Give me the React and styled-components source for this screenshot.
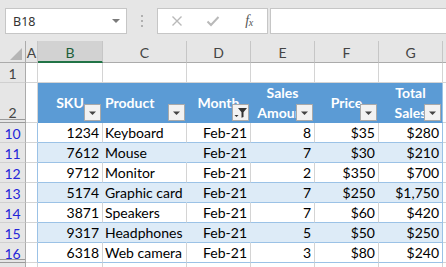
import React from "react";
import styled, { createGlobalStyle } from "styled-components";

const GlobalStyle = createGlobalStyle`
  html, body { margin: 0; padding: 0; background: #e6e6e6; overflow: hidden; }
  body { width: 446px; height: 267px; font-family: Lato, "Liberation Sans", sans-serif; }
`;

const Page = styled.div`
  width: 446px;
  height: 267px;
  overflow: hidden;
  background: #e6e6e6;
`;

const Toolbar = styled.div`
  height: 41px;
  box-sizing: border-box;
  padding: 8px 0 0 5px;
  display: flex;
  align-items: flex-start;
`;

const NameBox = styled.div`
  width: 122px;
  height: 26px;
  box-sizing: border-box;
  border: 1px solid #c6c6c6;
  background: #fff;
  display: flex;
  align-items: center;
  justify-content: space-between;
  padding: 0 6px 0 7px;
  font-family: "Noto Sans", sans-serif;
  font-size: 12.5px;
  color: #333;
`;

const Caret = styled.span`
  width: 0;
  height: 0;
  border-left: 4px solid transparent;
  border-right: 4px solid transparent;
  border-top: 4px solid #7a7a7a;
`;

const Grip = styled.div`
  width: 30px;
  height: 26px;
  display: flex;
  flex-direction: column;
  align-items: center;
  justify-content: center;
  gap: 3px;
  & > span {
    width: 2px;
    height: 2px;
    background: #b0b0b0;
  }
`;

const FxBox = styled.div`
  width: 111px;
  height: 26px;
  box-sizing: border-box;
  border: 1px solid #c6c6c6;
  background: #fff;
  display: grid;
  grid-template-columns: repeat(3, 36px);
  padding-left: 1px;
  align-items: center;
  justify-items: center;
`;

const FxText = styled.span`
  font-family: "Liberation Serif", serif;
  font-style: italic;
  font-size: 14px;
  color: #555;
  letter-spacing: -0.5px;
  & > sub {
    font-size: 10px;
    vertical-align: -1px;
  }
`;

const Formula = styled.div`
  flex: 1;
  height: 26px;
  box-sizing: border-box;
  border: 1px solid #c6c6c6;
  background: #fff;
  margin-left: 2px;
  margin-right: -4px;
`;

const Sheet = styled.div`
  display: grid;
  grid-template-columns: 26px 12px 65px 84px 64px 64px 64px 64px 1fr;
  grid-template-rows: 22px 20px 40px repeat(8, 20px);
  background: #fff;
  font-size: 14px;
`;

const Corner = styled.div`
  background: #e6e6e6;
  border-right: 1px solid #ababab;
  border-bottom: 1px solid #ababab;
  position: relative;
  box-sizing: border-box;
`;

const CornerTri = styled.svg`
  position: absolute;
  right: 3px;
  bottom: 2px;
`;

const ColHead = styled.div`
  box-sizing: border-box;
  background: ${(p) => (p.$selected ? "#d2d2d2" : "#e6e6e6")};
  border-right: 1px solid #c6c6c6;
  border-bottom: ${(p) => (p.$selected ? "2px solid #217346" : "1px solid #ababab")};
  color: ${(p) => (p.$selected ? "#1d5e3a" : "#444")};
  display: flex;
  align-items: center;
  justify-content: center;
  padding-top: 2px;
  font-size: 14px;
  overflow: hidden;
`;

const RowHead = styled.div`
  box-sizing: border-box;
  background: #e6e6e6;
  border-right: 1px solid #ababab;
  border-bottom: 1px solid ${(p) => (p.$hiddenAfter ? "#9a9a9a" : "#d0d0d0")};
  box-shadow: ${(p) =>
    p.$hiddenAfter ? "inset 0 -2px 0 #e6e6e6, inset 0 -3px 0 #9a9a9a" : "none"};
  color: ${(p) => (p.$filtered ? "#2424d8" : "#444")};
  display: flex;
  align-items: flex-end;
  justify-content: center;
  padding-bottom: ${(p) => (p.$tall ? "2px" : "1px")};
  font-size: 14px;
  line-height: 14px;
`;

const Cell = styled.div`
  box-sizing: border-box;
  position: relative;
  overflow: hidden;
  white-space: nowrap;
  display: flex;
  align-items: flex-end;
  line-height: 19px;
  padding: 0 3px 0 2px;
  color: #000;
  background: ${(p) => p.$fill || "transparent"};
  border-right: 1px solid ${(p) => p.$vline || "#d4d4d4"};
  border-bottom: 1px solid ${(p) => p.$hline || "#d4d4d4"};
  justify-content: ${(p) =>
    p.$align === "right" ? "flex-end" : p.$align === "center" ? "center" : "flex-start"};
`;

const HeadCell = styled.div`
  box-sizing: border-box;
  position: relative;
  overflow: hidden;
  white-space: nowrap;
  background: #5b9bd5;
  border-bottom: 1px solid #5b9bd5;
  border-right: 1px solid ${(p) => p.$vline || "#5b9bd5"};
  color: #fff;
  font-weight: 700;
  display: flex;
  flex-direction: column;
  justify-content: center;
  align-items: ${(p) => (p.$align === "left" ? "flex-start" : "center")};
  padding: 0 2px;
  line-height: 20px;
`;

const FilterBtn = styled.div`
  position: absolute;
  right: 1px;
  bottom: 1px;
  width: 17px;
  height: 17px;
  box-sizing: border-box;
  background: #f2f2f2;
  border: 1px solid #a9a9a9;
  display: flex;
  align-items: center;
  justify-content: center;
`;

const rows = [
  [10, "1234", "Keyboard", "Feb-21", "8", "$35", "$280"],
  [11, "7612", "Mouse", "Feb-21", "7", "$30", "$210"],
  [12, "9712", "Monitor", "Feb-21", "2", "$350", "$700"],
  [13, "5174", "Graphic card", "Feb-21", "7", "$250", "$1,750"],
  [14, "3871", "Speakers", "Feb-21", "7", "$60", "$420"],
  [15, "9317", "Headphones", "Feb-21", "5", "$50", "$250"],
  [16, "6318", "Web camera", "Feb-21", "3", "$80", "$240"],
];

const Arrow = () => (
  <svg width="9" height="9" viewBox="0 0 9 9">
    <path d="M1 3.5 H8 L4.5 7 Z" fill="#444" />
  </svg>
);

const FunnelArrow = () => (
  <svg width="15" height="15" viewBox="0 0 15 15">
    <path d="M5 3 H14 L10.5 7.2 V12 L8.5 12.8 V7.2 Z" fill="#333" />
    <path d="M1.5 10 H5.5 L3.5 12 Z" fill="#333" />
  </svg>
);

const Filter = ({ filtered }) => (
  <FilterBtn>{filtered ? <FunnelArrow /> : <Arrow />}</FilterBtn>
);

const cols = ["A", "B", "C", "D", "E", "F", "G", ""];

export default function App() {
  return (
    <Page>
      <GlobalStyle />
      <Toolbar>
        <NameBox>
          <span>B18</span>
          <Caret />
        </NameBox>
        <Grip>
          <span />
          <span />
          <span />
        </Grip>
        <FxBox>
          <svg width="12" height="12" viewBox="0 0 12 12">
            <path d="M1.5 1.5 L10.5 10.5 M10.5 1.5 L1.5 10.5" stroke="#b9b9b9" strokeWidth="1.4" />
          </svg>
          <svg width="14" height="12" viewBox="0 0 14 12">
            <path d="M1.5 6.5 L5 10 L12.5 2" stroke="#b9b9b9" strokeWidth="2" fill="none" />
          </svg>
          <FxText>
            f<sub>x</sub>
          </FxText>
        </FxBox>
        <Formula />
      </Toolbar>
      <Sheet>
        <Corner>
          <CornerTri width="12" height="12" viewBox="0 0 12 12">
            <path d="M12 0 V12 H0 Z" fill="#b5b5b5" />
          </CornerTri>
        </Corner>
        {cols.map((c, i) => (
          <ColHead key={i} $selected={c === "B"}>
            {c}
          </ColHead>
        ))}

        <RowHead>1</RowHead>
        {cols.map((c, i) => (
          <Cell key={i} />
        ))}

        <RowHead $hiddenAfter $tall>
          2
        </RowHead>
        <Cell $hline="#d4d4d4" />
        <HeadCell>
          SKU
          <Filter />
        </HeadCell>
        <HeadCell $align="left">
          Product
          <Filter />
        </HeadCell>
        <HeadCell>
          Month
          <Filter filtered />
        </HeadCell>
        <HeadCell>
          <span>Sales</span>
          <span>Amount</span>
          <Filter />
        </HeadCell>
        <HeadCell>
          Price
          <Filter />
        </HeadCell>
        <HeadCell $vline="#9bc2e6">
          <span>Total</span>
          <span>Sales</span>
          <Filter />
        </HeadCell>
        <Cell />

        {rows.map(([n, ...vals], r) => {
          const band = r % 2 === 1;
          const fill = band ? "#ddebf7" : undefined;
          return (
            <React.Fragment key={n}>
              <RowHead $filtered $hiddenAfter={n === 16}>
                {n}
              </RowHead>
              <Cell $vline="#9bc2e6" />
              {vals.map((v, i) => (
                <Cell
                  key={i}
                  $fill={fill}
                  $hline="#9bc2e6"
                  $vline={i === 5 ? "#9bc2e6" : band ? "#ddebf7" : "#d4d4d4"}
                  $align={i === 1 ? "left" : "right"}
                >
                  {v}
                </Cell>
              ))}
              <Cell />
            </React.Fragment>
          );
        })}

        <RowHead />
        {cols.map((c, i) => (
          <Cell key={i} />
        ))}
      </Sheet>
    </Page>
  );
}
